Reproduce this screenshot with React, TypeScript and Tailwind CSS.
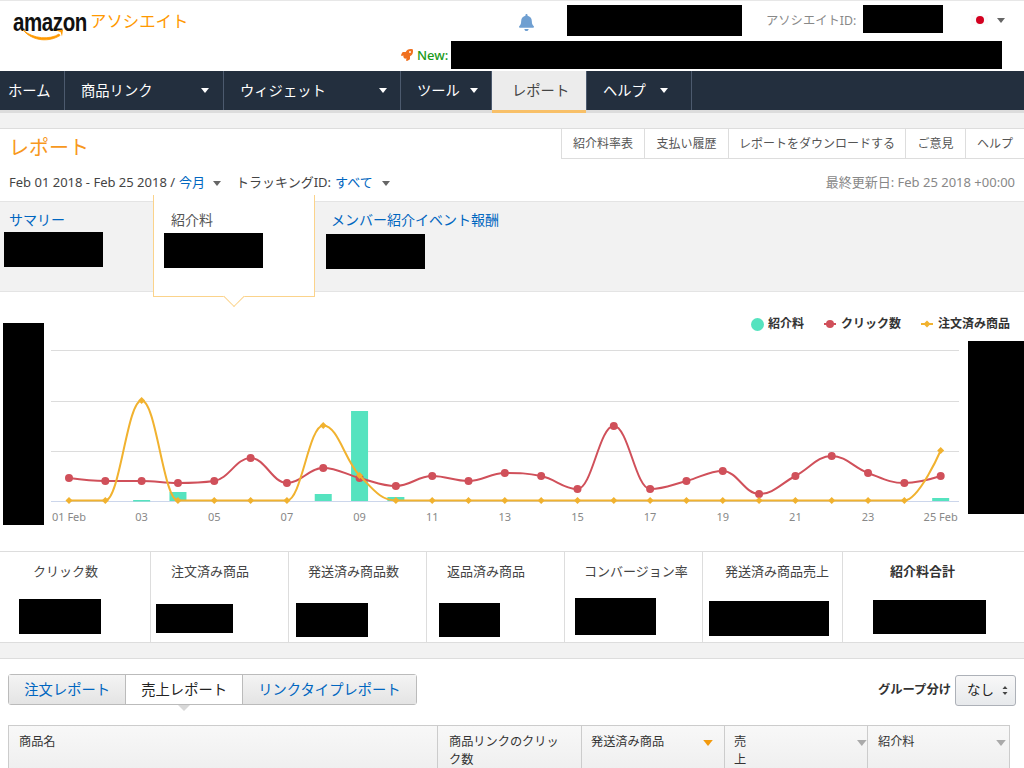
import React from 'react';
import { FaBell, FaRocket } from 'react-icons/fa';

// chart data, y in px read off the plot
const clicks = [478, 481, 481, 483, 481, 458, 483, 468, 478, 486, 476, 481, 473, 476, 489, 426, 489, 481, 471, 494, 476, 456, 473, 483, 476];
const orders = Array.from({ length: 25 }, (_, i) => {
  if (i === 2) return 400.5;
  if (i === 7) return 425.5;
  if (i === 8) return 475.5;
  if (i === 24) return 450.5;
  return 500.5;
});
const bars = [
  { day: 3, top: 500 },
  { day: 4, top: 492 },
  { day: 8, top: 494 },
  { day: 9, top: 411 },
  { day: 10, top: 497 },
  { day: 25, top: 498 },
];
const dayX = (i: number) => 69 + i * 36.32;

// same spline smoothing the chart lib uses
const splinePath = (ys: number[]) => {
  const s = 1.5;
  const d = 2.5;
  let path = `M ${dayX(0)} ${ys[0]}`;
  let prevRightX = dayX(0);
  let prevRightY = ys[0];
  for (let i = 1; i < ys.length; i++) {
    const x = dayX(i);
    const y = ys[i];
    let leftX = x;
    let leftY = y;
    let rightX = x;
    let rightY = y;
    if (i < ys.length - 1) {
      const lastX = dayX(i - 1);
      const lastY = ys[i - 1];
      const nextX = dayX(i + 1);
      const nextY = ys[i + 1];
      leftX = (s * x + lastX) / d;
      leftY = (s * y + lastY) / d;
      rightX = (s * x + nextX) / d;
      rightY = (s * y + nextY) / d;
      const correction = ((rightY - leftY) * (rightX - x)) / (rightX - leftX) + y - rightY;
      leftY += correction;
      rightY += correction;
      if (leftY > lastY && leftY > y) {
        leftY = Math.max(lastY, y);
        rightY = 2 * y - leftY;
      } else if (leftY < lastY && leftY < y) {
        leftY = Math.min(lastY, y);
        rightY = 2 * y - leftY;
      }
      if (rightY > nextY && rightY > y) {
        rightY = Math.max(nextY, y);
        leftY = 2 * y - rightY;
      } else if (rightY < nextY && rightY < y) {
        rightY = Math.min(nextY, y);
        leftY = 2 * y - rightY;
      }
    }
    path += ` C ${prevRightX} ${prevRightY} ${leftX} ${leftY} ${x} ${y}`;
    prevRightX = rightX;
    prevRightY = rightY;
  }
  return path;
};

const Caret: React.FC<{ className?: string }> = ({ className }) => (
  <svg width="8" height="5" viewBox="0 0 8 5" className={className}>
    <polygon points="0,0 8,0 4,5" fill="currentColor" />
  </svg>
);

const Redact: React.FC<{ className: string }> = ({ className }) => <div className={`bg-black shrink-0 ${className}`} />;

const Logo = () => (
  <div className="relative w-[200px] h-[70px] pl-[13px] pt-[8px] flex items-start shrink-0">
    <div className="w-[77px] h-[26px] text-[25px] leading-[26px] font-bold text-[#111] origin-left scale-x-[0.82] tracking-[-0.5px] font-['Liberation_Sans',sans-serif]">
      amazon
    </div>
    <div className="text-[16.4px] leading-[24px] text-[#f90] whitespace-nowrap">アソシエイト</div>
    <svg className="absolute left-0 top-0" width="80" height="45" viewBox="0 0 80 45">
      <path d="M23 29 C33 38 50 39 59 33 L60 34.5 C50 41 33 41 23 29 Z" fill="#f90" stroke="#f90" strokeWidth="0.8" />
      <path d="M56 29.5 L63 28.5 L62 35.5 L60.6 31 Z" fill="#f90" />
    </svg>
  </div>
);

const Header = () => (
  <div className="flex h-[70px]">
    <Logo />
    <div className="flex-1 flex flex-col">
      <div className="flex items-start pt-[4px] h-[40px]">
        <FaBell className="ml-[318px] mt-[9px] text-[#6f9fd1]" size={17} />
        <Redact className="ml-[32px] w-[175px] h-[31px]" />
        <div className="ml-[24px] mt-[8px] text-[12.3px] leading-[16px] text-[#888] whitespace-nowrap w-[97px]">アソシエイトID:</div>
        <Redact className="w-[80px] h-[28px]" />
        <div className="ml-[28px] mt-[10px] w-[17px] h-[10px] bg-[#fbfbfb] flex items-center justify-center">
          <div className="w-[8px] h-[8px] rounded-full bg-[#d3001f]" />
        </div>
        <Caret className="ml-[9px] mt-[13px] text-[#666]" />
      </div>
      <div className="flex items-start">
        <FaRocket className="ml-[201px] mt-[8px] text-[#f0701f]" size={12} />
        <div className="ml-[4px] mt-[5px] w-[34px] text-[13px] leading-[18px] font-medium text-[#1a9a1a]">New:</div>
        <Redact className="w-[551px] h-[28px]" />
      </div>
    </div>
  </div>
);

const navItems = [
  { label: 'ホーム', w: 'w-[65px]', pl: 'pl-[8px]', caret: '' },
  { label: '商品リンク', w: 'w-[159px]', pl: 'pl-[16px]', caret: 'ml-[49px]' },
  { label: 'ウィジェット', w: 'w-[177px]', pl: 'pl-[16px]', caret: 'ml-[53px]' },
  { label: 'ツール', w: 'w-[91px]', pl: 'pl-[16px]', caret: 'ml-[10px]' },
];

const Nav = () => (
  <div className="flex h-[39px] bg-[#232f3e] text-[14.3px] text-white">
    {navItems.map((item) => (
      <div key={item.label} className={`flex items-center border-r border-[#4c5a6e] ${item.w} ${item.pl}`}>
        <span className="whitespace-nowrap">{item.label}</span>
        {item.caret && <Caret className={item.caret} />}
      </div>
    ))}
    <div className="relative w-[95px] pl-[20px] flex items-center bg-[#ececec] text-[#444] border-r border-[#4c5a6e]">
      レポート
      <div className="absolute left-0 right-0 -bottom-[3px] h-[3px] bg-[#f8c068]" />
    </div>
    <div className="w-[105px] pl-[16px] flex items-center border-r border-[#4c5a6e]">
      ヘルプ
      <Caret className="ml-[14px]" />
    </div>
  </div>
);

const subLinks = [
  { label: '紹介料率表', w: 'w-[83px]' },
  { label: '支払い履歴', w: 'w-[84px]' },
  { label: 'レポートをダウンロードする', w: 'w-[177px]' },
  { label: 'ご意見', w: 'w-[60px]' },
  { label: 'ヘルプ', w: 'w-[59px]' },
];

const TitleBlock = () => (
  <div className="h-[72px] relative">
    <div className="flex justify-between h-[30px]">
      <div className="pl-[9px] pt-[6px] text-[20px] leading-[26px] text-[#f7981d]">レポート</div>
      <div className="flex h-[30px] border-b border-[#ddd]">
        {subLinks.map((link) => (
          <div key={link.label} className={`${link.w} flex items-center justify-center border-l border-[#ddd] text-[12px] text-[#555] whitespace-nowrap`}>
            {link.label}
          </div>
        ))}
      </div>
    </div>
    <div className="flex items-center justify-between px-[9px] mt-[14px] h-[20px] text-[13px]">
      <div className="flex items-center text-[#444] whitespace-nowrap">
        <span>Feb 01 2018 - Feb 25 2018 / </span>
        <span className="ml-[4px] text-[#0066c0]">今月</span>
        <Caret className="ml-[8px] text-[#666]" />
        <span className="ml-[15px]">トラッキングID:</span>
        <span className="ml-[4px] text-[#0066c0]">すべて</span>
        <Caret className="ml-[9px] text-[#666]" />
      </div>
      <div className="text-[#888] whitespace-nowrap">最終更新日: Feb 25 2018 +00:00</div>
    </div>
  </div>
);

const MetricTabs = () => (
  <div className="flex h-[91px] bg-[#f2f2f2] border-y border-[#e4e4e4] text-[14px]">
    <div className="w-[153px] pl-[4px] pt-[8px]">
      <div className="ml-[5px] h-[20px] leading-[20px] text-[#0066c0]">サマリー</div>
      <Redact className="mt-[2px] w-[99px] h-[35px]" />
    </div>
    <div className="relative z-10 w-[162px] h-[102px] -mt-[7px] pl-[10px] pt-[15px] bg-white border-x border-b border-[#fbd38b]">
      <div className="ml-[7px] h-[20px] leading-[20px] text-[#555]">紹介料</div>
      <Redact className="mt-[3px] w-[99px] h-[35px]" />
      <div className="absolute left-1/2 -translate-x-1/2 -bottom-[8px] w-[15px] h-[15px] rotate-45 bg-white border-r border-b border-[#fbd38b]" />
    </div>
    <div className="flex-1 pl-[11px] pt-[8px]">
      <div className="ml-[5px] h-[20px] leading-[20px] text-[#0066c0] whitespace-nowrap">メンバー紹介イベント報酬</div>
      <Redact className="mt-[4px] w-[99px] h-[35px]" />
    </div>
  </div>
);

const Legend = () => (
  <div className="absolute right-[14px] top-[24px] flex items-center text-[12px] leading-[16px] font-bold text-[#333]">
    <div className="w-[13px] h-[13px] rounded-full bg-[#55e3bf]" />
    <span className="ml-[4px]">紹介料</span>
    <svg className="ml-[20px]" width="12" height="10" viewBox="0 0 12 10">
      <line x1="0" y1="5" x2="12" y2="5" stroke="#d0505a" strokeWidth="2" />
      <circle cx="6" cy="5" r="4" fill="#d0505a" />
    </svg>
    <span className="ml-[5px]">クリック数</span>
    <svg className="ml-[20px]" width="12" height="10" viewBox="0 0 12 10">
      <line x1="0" y1="5" x2="12" y2="5" stroke="#f1b22f" strokeWidth="2" />
      <polygon points="6,1.5 9.5,5 6,8.5 2.5,5" fill="#f1b22f" />
    </svg>
    <span className="ml-[5px]">注文済み商品</span>
  </div>
);

const Chart = () => (
  <div className="relative flex h-[259px]">
    <Redact className="ml-[3px] mt-[31px] w-[41px] h-[202px]" />
    <svg className="flex-1" width="924" height="259" viewBox="44 292 924 259">
      {[350.5, 401.5, 451.5].map((y) => (
        <line key={y} x1="51" x2="959" y1={y} y2={y} stroke="#dcdcdc" strokeWidth="1" />
      ))}
      <line x1="51" x2="959" y1="501.5" y2="501.5" stroke="#ccd6eb" strokeWidth="1" />
      <rect x={dayX(2) - 8.5} y="500" width="17" height="1.5" fill="#55e3bf" />
      {bars.slice(1).map((b) => (
        <rect key={b.day} x={dayX(b.day - 1) - 8.5} y={b.top} width="17" height={501 - b.top} fill="#55e3bf" />
      ))}
      <path d={splinePath(clicks)} fill="none" stroke="#d0505a" strokeWidth="2" />
      {clicks.map((y, i) => (
        <circle key={i} cx={dayX(i)} cy={y} r="4" fill="#d0505a" />
      ))}
      <path d={splinePath(orders)} fill="none" stroke="#f1b22f" strokeWidth="2" />
      {orders.map((y, i) => (
        <polygon key={i} points={`${dayX(i)},${y - 3.5} ${dayX(i) + 3.5},${y} ${dayX(i)},${y + 3.5} ${dayX(i) - 3.5},${y}`} fill="#f1b22f" />
      ))}
      {Array.from({ length: 13 }, (_, k) => {
        const day = k * 2 + 1;
        const text = day === 1 ? '01 Feb' : day === 25 ? '25 Feb' : String(day).padStart(2, '0');
        return (
          <text key={day} x={dayX(day - 1)} y="521" textAnchor="middle" fontSize="11" fill="#888">
            {text}
          </text>
        );
      })}
    </svg>
    <Redact className="mt-[49px] w-[56px] h-[173px]" />
    <Legend />
  </div>
);

const stats = [
  { label: 'クリック数', w: 'w-[151px]', pl: 'pl-[33px]', box: 'ml-[19px] mt-[18px] w-[82px] h-[35px]' },
  { label: '注文済み商品', w: 'w-[138px]', pl: 'pl-[20px]', box: 'ml-[5px] mt-[23px] w-[77px] h-[29px]' },
  { label: '発送済み商品数', w: 'w-[138px]', pl: 'pl-[19px]', box: 'ml-[7px] mt-[22px] w-[72px] h-[34px]' },
  { label: '返品済み商品', w: 'w-[138px]', pl: 'pl-[20px]', box: 'ml-[12px] mt-[22px] w-[61px] h-[34px]' },
  { label: 'コンバージョン率', w: 'w-[138px]', pl: 'pl-[19px]', box: 'ml-[10px] mt-[17px] w-[81px] h-[37px]' },
  { label: '発送済み商品売上', w: 'w-[140px]', pl: 'pl-[22px]', box: 'ml-[6px] mt-[20px] w-[120px] h-[35px]' },
  { label: '紹介料合計', w: 'flex-1', pl: 'pl-[47px]', box: 'ml-[30px] mt-[19px] w-[113px] h-[34px]', bold: true },
];

const StatRow = () => (
  <div className="flex h-[92px] border-y border-[#ddd]">
    {stats.map((s, i) => (
      <div key={s.label} className={`${s.w} pt-[9px] ${i < stats.length - 1 ? 'border-r border-[#ddd]' : ''}`}>
        <div className={`${s.pl} h-[20px] leading-[20px] text-[13px] whitespace-nowrap ${s.bold ? 'font-bold text-[#333]' : 'text-[#444]'}`}>{s.label}</div>
        <Redact className={s.box} />
      </div>
    ))}
  </div>
);

const reportTabs = [
  { label: '注文レポート', w: 'w-[117px]', active: false },
  { label: '売上レポート', w: 'w-[117px]', active: true },
  { label: 'リンクタイプレポート', w: 'w-[175px]', active: false },
];

const Controls = () => (
  <div className="flex items-start justify-between px-[8px] pt-[15px] h-[66px]">
    <div className="flex w-[409px] h-[31px] border border-[#bbb] rounded-[3px] text-[14.3px]">
      {reportTabs.map((t, i) => (
        <div
          key={t.label}
          className={`relative ${t.w} flex items-center justify-center whitespace-nowrap ${i > 0 ? 'border-l border-[#bbb]' : ''} ${
            t.active ? 'bg-white text-[#222]' : 'bg-gradient-to-b from-[#f4f4f4] to-[#e4e4e4] text-[#0066c0]'
          }`}
        >
          {t.label}
          {t.active && <div className="absolute left-1/2 -translate-x-1/2 top-full mt-px w-0 h-0 border-x-[6px] border-t-[6px] border-x-transparent border-t-[#d8d8d8]" />}
        </div>
      ))}
    </div>
    <div className="flex items-center">
      <span className="text-[12.3px] font-bold text-[#333] whitespace-nowrap">グループ分け</span>
      <div className="ml-[4px] mt-px w-[61px] h-[31px] flex items-center pl-[11px] border border-[#adb1b8] rounded-[3px] bg-gradient-to-b from-[#f8f8f8] to-[#e7e9ec] text-[13.5px] text-[#222]">
        なし
        <svg className="ml-[8px]" width="6" height="9" viewBox="0 0 6 9">
          <polygon points="3,0 5.5,3 0.5,3" fill="#444" />
          <polygon points="0.5,6 5.5,6 3,9" fill="#444" />
        </svg>
      </div>
    </div>
  </div>
);

const TableHead = () => (
  <div className="mx-[8px] w-[1002px] h-[60px] grid grid-cols-[428px_144px_143px_143px_1fr] border border-[#ccc] bg-gradient-to-b from-[#f8f8f8] to-[#ececec] text-[12.2px] leading-[18px] text-[#333]">
    <div className="pl-[10px] pt-[7px]">商品名</div>
    <div className="pl-[11px] pr-[16px] pt-[7px] border-l border-[#ccc]">商品リンクのクリック数</div>
    <div className="flex items-start pl-[9px] pt-[7px] border-l border-[#ccc]">
      発送済み商品
      <Caret className="ml-[39px] mt-[7px] w-[10px] h-[6px] text-[#f29a0e]" />
    </div>
    <div className="flex items-start pl-[9px] pt-[7px] border-l border-[#ccc]">
      売上
      <Caret className="ml-[100px] mt-[7px] w-[10px] h-[6px] text-[#aaa]" />
    </div>
    <div className="flex items-start pl-[10px] pt-[7px] border-l border-[#ccc]">
      紹介料
      <Caret className="ml-[81px] mt-[7px] w-[10px] h-[6px] text-[#aaa]" />
    </div>
  </div>
);

export default function App() {
  return (
    <div className="h-[768px] w-[1024px] overflow-hidden bg-white font-['Noto_Sans','Noto_Sans_CJK_JP',sans-serif]">
      <div className="h-px bg-[#e7e7e7]" />
      <Header />
      <Nav />
      <div className="h-[3px] bg-[#dcdcdc]" />
      <div className="h-[15px] bg-[#f2f2f2] border-b border-[#ddd] box-content" />
      <TitleBlock />
      <MetricTabs />
      <Chart />
      <StatRow />
      <div className="h-[16px] bg-[#f2f2f2] border-b border-[#ddd]" />
      <Controls />
      <TableHead />
    </div>
  );
}
